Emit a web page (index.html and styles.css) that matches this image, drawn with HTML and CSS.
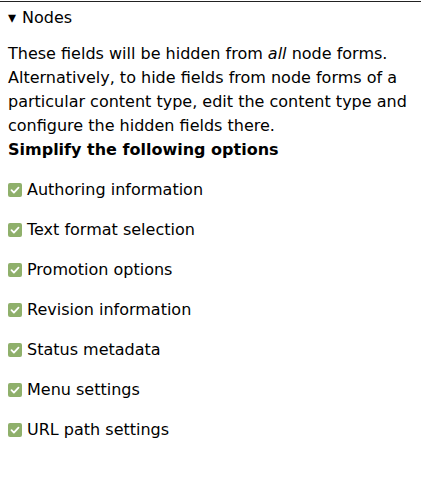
FILE: index.html
```html
<!DOCTYPE html>
<html lang="en">
<head>
    <meta charset="UTF-8">
    <title>Nodes</title>
    <link rel="stylesheet" href="styles.css">
</head>
<body>
    <details class="fieldset" open>
        <summary class="fieldset-title">Nodes</summary>
        <div class="fieldset-body">
            <p class="description">These fields will be hidden from <em>all</em> node forms. Alternatively, to hide fields from node forms of a particular content type, edit the content type and configure the hidden fields there.</p>
            <div class="options-title">Simplify the following options</div>
            <ul class="options">
                <li class="option"><span class="check"><svg viewBox="0 0 14 14" width="14" height="14"><path d="M3.5 7.2l2.4 2.4 4.6-5" fill="none" stroke="#fff" stroke-width="1.8" stroke-linecap="round" stroke-linejoin="round"/></svg></span>Authoring information</li>
                <li class="option"><span class="check"><svg viewBox="0 0 14 14" width="14" height="14"><path d="M3.5 7.2l2.4 2.4 4.6-5" fill="none" stroke="#fff" stroke-width="1.8" stroke-linecap="round" stroke-linejoin="round"/></svg></span>Text format selection</li>
                <li class="option"><span class="check"><svg viewBox="0 0 14 14" width="14" height="14"><path d="M3.5 7.2l2.4 2.4 4.6-5" fill="none" stroke="#fff" stroke-width="1.8" stroke-linecap="round" stroke-linejoin="round"/></svg></span>Promotion options</li>
                <li class="option"><span class="check"><svg viewBox="0 0 14 14" width="14" height="14"><path d="M3.5 7.2l2.4 2.4 4.6-5" fill="none" stroke="#fff" stroke-width="1.8" stroke-linecap="round" stroke-linejoin="round"/></svg></span>Revision information</li>
                <li class="option"><span class="check"><svg viewBox="0 0 14 14" width="14" height="14"><path d="M3.5 7.2l2.4 2.4 4.6-5" fill="none" stroke="#fff" stroke-width="1.8" stroke-linecap="round" stroke-linejoin="round"/></svg></span>Status metadata</li>
                <li class="option"><span class="check"><svg viewBox="0 0 14 14" width="14" height="14"><path d="M3.5 7.2l2.4 2.4 4.6-5" fill="none" stroke="#fff" stroke-width="1.8" stroke-linecap="round" stroke-linejoin="round"/></svg></span>Menu settings</li>
                <li class="option"><span class="check"><svg viewBox="0 0 14 14" width="14" height="14"><path d="M3.5 7.2l2.4 2.4 4.6-5" fill="none" stroke="#fff" stroke-width="1.8" stroke-linecap="round" stroke-linejoin="round"/></svg></span>URL path settings</li>
            </ul>
        </div>
    </details>
</body>
</html>
```

FILE: styles.css
```css
body {
    margin: 0;
    padding-top: 1px;
    font-family: "DejaVu Sans", sans-serif;
    font-size: 16px;
    line-height: 24px;
    color: #000;
    background: #fff;
}

.fieldset {
    border-top: 1px solid #222;
}

.fieldset-title {
    display: block;
    padding: 4px 8px 3px;
    cursor: pointer;
}

.fieldset-title::before {
    content: "\25BE";
    display: inline-block;
    width: 14px;
    font-size: 16px;
}

.fieldset-body {
    padding: 9px 8px 0;
}

.description {
    margin: 0;
}

.options-title {
    font-weight: bold;
}

.options {
    list-style: none;
    margin: 16px 0 0;
    padding: 0;
}

.option {
    display: flex;
    align-items: center;
    gap: 5px;
    margin-bottom: 16px;
}

.check {
    display: flex;
    width: 14px;
    height: 14px;
    border-radius: 2px;
    background-color: #8fb06b;
}
```
